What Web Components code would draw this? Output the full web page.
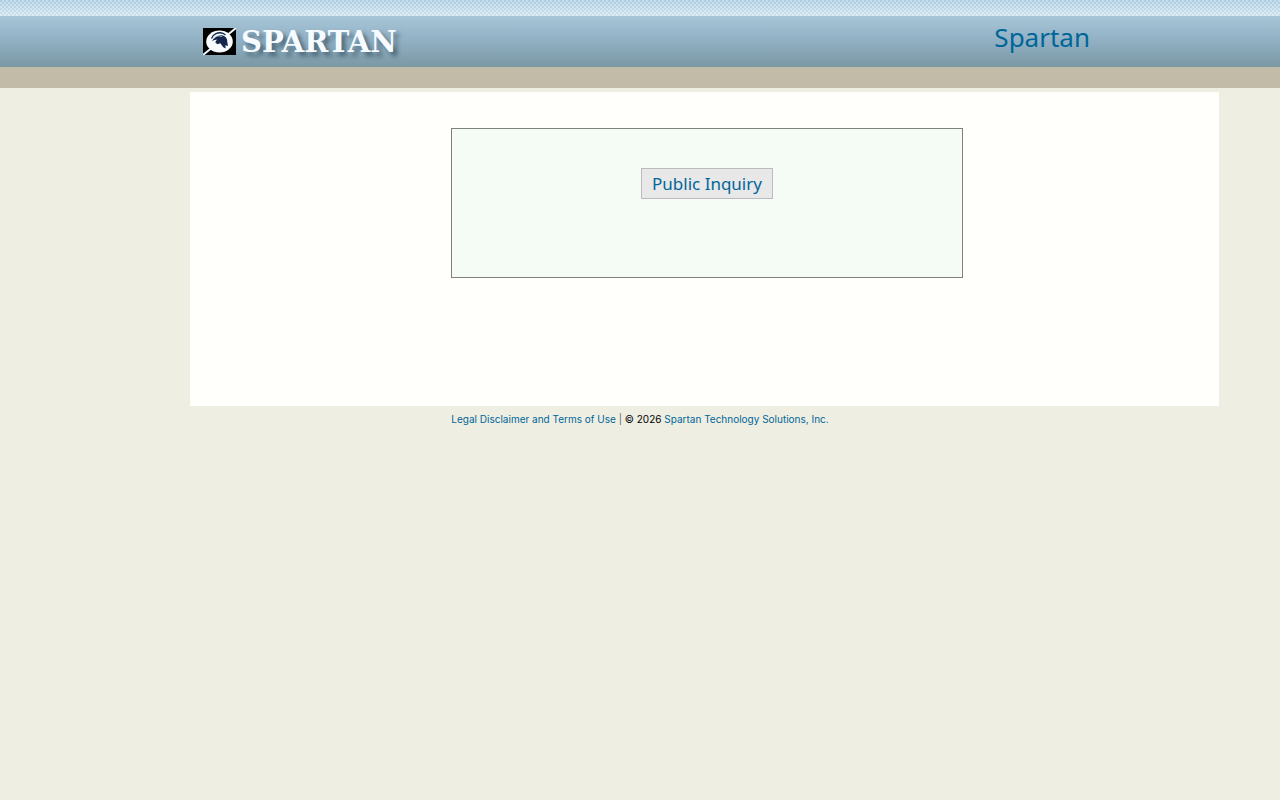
<!DOCTYPE html>
<html lang="en">
<head>
    <meta charset="utf-8">
    <title>Spartan</title>
    <style>
        body{
            margin: 0;
            background: #eeeee2;
            color: #000;
            font-family: "Noto Sans", sans-serif;
            font-size: 16px;
        }
    </style>
</head>
<body>
    <template id="spartanLogo">
        <style>
            :host{
                display: flex;
                align-items: center;
                gap: 5px;
            }
            svg{
                display: block;
                width: 33px;
                height: 27px;
            }
            span{
                color: #f5fbff;
                font: bold 29px/32px "DejaVu Serif", serif;
                text-shadow: 4px 4px 4px rgba(35, 60, 78, .6);
            }
        </style>
        <svg viewBox="0 0 33 27" aria-hidden="true">
            <rect width="33" height="27" fill="#000"/>
            <path d="M0 27 33 0" stroke="#f2f9fc" stroke-width="2"/>
            <ellipse cx="16.5" cy="13.5" rx="13.3" ry="11" fill="#f8fcff"/>
            <path d="M8.5 10.5C10 6 15 3.7 20 5.3L22.5 7" fill="none" stroke="#14264a" stroke-width="1.3"/>
            <path d="M9 13.3C11 9 14.5 7 18.5 7.3C22.5 7.8 24.5 10.5 24.3 14L25 18 22.3 17.2 22.7 20.5 20.3 19.3 17.3 15.3 14.3 16.2 12.2 14.2 14 11.5 10.8 12.2Z" fill="#14264a"/>
            <path d="M10.5 10.8C13 8 16 7.2 19.3 8.8" fill="none" stroke="#c5d5e4" stroke-width=".7"/>
        </svg>
        <span><slot></slot></span>
    </template>

    <template id="pageHeader">
        <style>
            :host{
                display: block;
            }
            .dots{
                height: 16px;
                background:
                    repeating-conic-gradient(rgba(255, 255, 255, .35) 0 25%, transparent 0 50%) 0 0 / 4px 4px,
                    linear-gradient(#a9cbe0, #cfe3ef);
            }
            .bar{
                display: flex;
                justify-content: space-between;
                height: 51px;
                padding: 0 190px 0 203px;
                background: linear-gradient(#a7c6d8, #90afc2 50%, #7a98a4);
            }
            .name{
                padding-top: 4px;
                color: #006699;
                font-size: 26px;
                line-height: 34px;
            }
            .strip{
                height: 21px;
                background: #c1bba8;
            }
        </style>
        <div class="dots"></div>
        <div class="bar">
            <slot name="logo"></slot>
            <div class="name"><slot name="name"></slot></div>
        </div>
        <div class="strip"></div>
    </template>

    <template id="pageContent">
        <style>
            :host{
                display: block;
                margin: 4px 61px 0 190px;
                padding: 36px 0 128px 5px;
                background: #fffffc;
            }
            .panel{
                box-sizing: border-box;
                width: 50%;
                min-height: 150px;
                margin: 0 auto;
                padding-top: 39px;
                border: 1px solid #808080;
                background: #f5fbf5;
                text-align: center;
            }
        </style>
        <div class="panel"><slot></slot></div>
    </template>

    <template id="linkButton">
        <style>
            :host{
                display: inline-block;
                vertical-align: top;
            }
            button{
                display: block;
                padding: 3px 10px;
                border: 1px solid #bbbbbb;
                background: #e8e8e8;
                color: #006699;
                font: 17px/23px "Noto Sans", sans-serif;
            }
        </style>
        <button type="button"><slot></slot></button>
    </template>

    <template id="pageFooter">
        <style>
            :host{
                display: block;
                padding-top: 5px;
                font-family: Inter, sans-serif;
                font-size: 10px;
                line-height: 16px;
                text-align: center;
            }
            a{
                color: #006699;
                text-decoration: none;
            }
            .divider{
                color: #666;
            }
        </style>
        <a href="#legal">Legal Disclaimer and Terms of Use</a> <span class="divider">|</span> © 2026 <a href="#company">Spartan Technology Solutions, Inc.</a>
    </template>

    <page-header>
        <spartan-logo slot="logo">SPARTAN</spartan-logo>
        <span slot="name">Spartan</span>
    </page-header>
    <page-content>
        <link-button>Public Inquiry</link-button>
    </page-content>
    <page-footer></page-footer>

    <script>
        class TemplateElement extends HTMLElement{
            constructor(){
                super()
                const template = document.querySelector(`#${this.constructor.template}`)
                this.attachShadow({mode: 'open'}).appendChild(template.content.cloneNode(true))
            }
        }

        class SpartanLogo extends TemplateElement{
            static get template() { return 'spartanLogo' }
        }

        class PageHeader extends TemplateElement{
            static get template() { return 'pageHeader' }
        }

        class PageContent extends TemplateElement{
            static get template() { return 'pageContent' }
        }

        class LinkButton extends TemplateElement{
            static get template() { return 'linkButton' }
        }

        class PageFooter extends TemplateElement{
            static get template() { return 'pageFooter' }
        }

        window.customElements.define('spartan-logo', SpartanLogo)
        window.customElements.define('page-header', PageHeader)
        window.customElements.define('page-content', PageContent)
        window.customElements.define('link-button', LinkButton)
        window.customElements.define('page-footer', PageFooter)
    </script>
</body>
</html>
